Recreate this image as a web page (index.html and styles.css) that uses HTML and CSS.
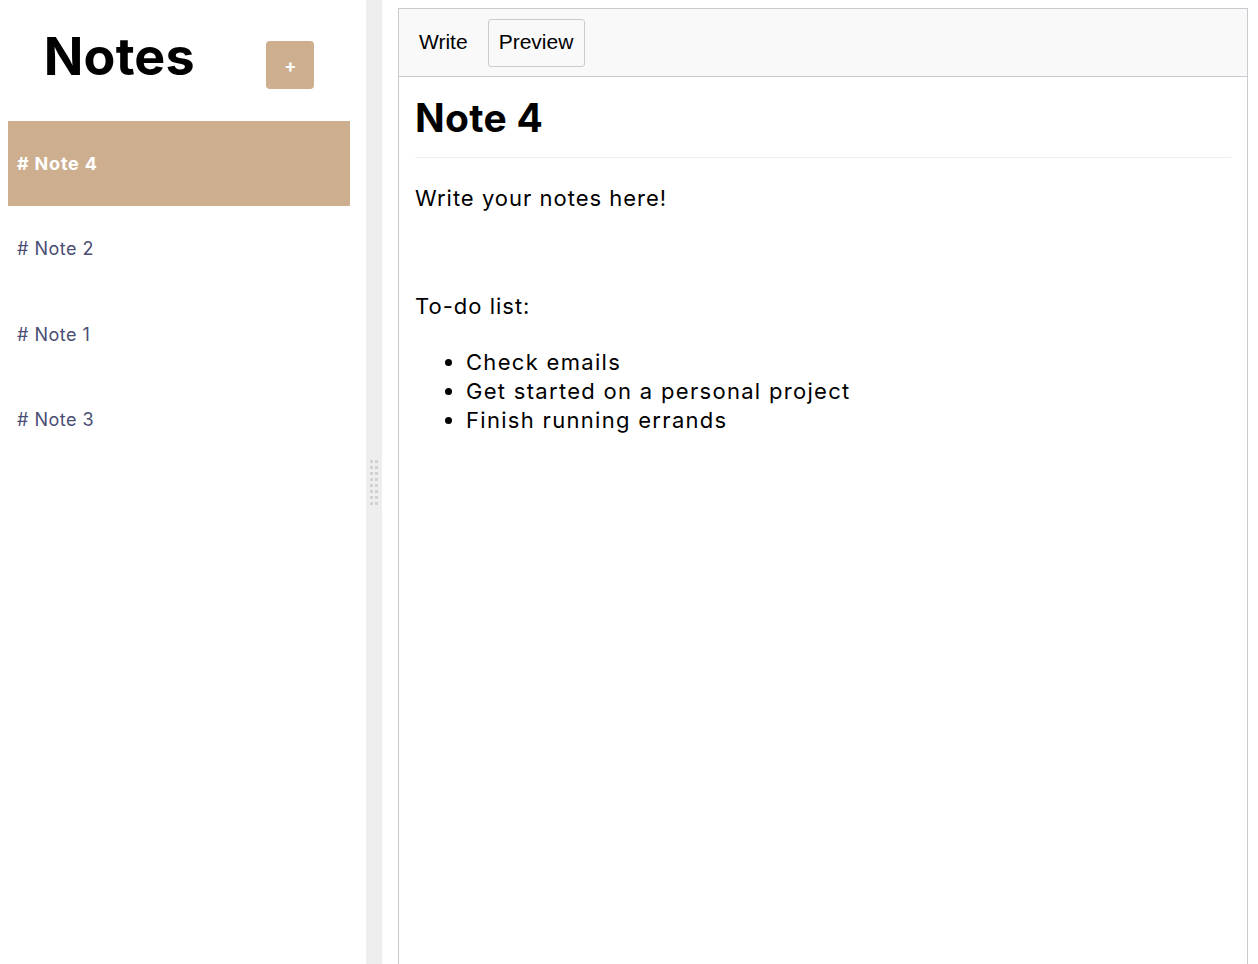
FILE: index.html
```html
<!DOCTYPE html>
<html lang="en">
<head>
<meta charset="utf-8">
<title>Notes</title>
<link rel="stylesheet" href="styles.css">
</head>
<body>
<main class="split">
  <section class="sidebar">
    <div class="sidebar-header">
      <h1 class="sidebar-title">Notes</h1>
      <button class="new-note">+</button>
    </div>
    <ul class="note-list">
      <li class="note-item selected"># Note 4</li>
      <li class="note-item"># Note 2</li>
      <li class="note-item"># Note 1</li>
      <li class="note-item"># Note 3</li>
    </ul>
  </section>
  <div class="gutter">
    <svg class="grip" width="8" height="47" viewBox="0 0 8 47">
      <g fill="#d2d2d2">
        <rect x="0" y="0" width="3" height="3"/><rect x="5" y="0" width="3" height="3"/>
        <rect x="0" y="6" width="3" height="3"/><rect x="5" y="6" width="3" height="3"/>
        <rect x="0" y="12" width="3" height="3"/><rect x="5" y="12" width="3" height="3"/>
        <rect x="0" y="18" width="3" height="3"/><rect x="5" y="18" width="3" height="3"/>
        <rect x="0" y="24" width="3" height="3"/><rect x="5" y="24" width="3" height="3"/>
        <rect x="0" y="30" width="3" height="3"/><rect x="5" y="30" width="3" height="3"/>
        <rect x="0" y="36" width="3" height="3"/><rect x="5" y="36" width="3" height="3"/>
        <rect x="0" y="42" width="3" height="3"/><rect x="5" y="42" width="3" height="3"/>
      </g>
    </svg>
  </div>
  <section class="editor">
    <div class="mde">
      <div class="mde-header">
        <button class="tab">Write</button>
        <button class="tab tab-active">Preview</button>
      </div>
      <div class="preview">
        <h1 class="preview-title">Note 4</h1>
        <p class="preview-text">Write your notes here!</p>
        <p class="preview-text spaced">To-do list:</p>
        <ul class="todo">
          <li>Check emails</li>
          <li>Get started on a personal project</li>
          <li>Finish running errands</li>
        </ul>
      </div>
    </div>
  </section>
</main>
</body>
</html>
```

FILE: styles.css
```css
html, body {
  margin: 0;
  padding: 0;
  height: 100%;
  overflow: hidden;
}

body {
  font-family: Inter, "Noto Sans", sans-serif;
  background: #fff;
}

.split {
  display: flex;
  height: 964px;
}

.sidebar {
  width: 366px;
  flex: none;
  box-sizing: border-box;
  padding: 0 16px 0 8px;
}

.sidebar-header {
  height: 121px;
  display: flex;
  justify-content: space-around;
  align-items: flex-start;
}

.sidebar-title {
  margin: 25px 0 0;
  font-size: 52px;
  line-height: 64px;
  font-weight: 700;
  color: #000;
  letter-spacing: 0.2px;
}

.new-note {
  margin-top: 41px;
  width: 48px;
  height: 48px;
  border: none;
  border-radius: 4px;
  background: #cdaf8f;
  color: #fff;
  font-family: Inter, sans-serif;
  font-weight: 700;
  font-size: 18px;
  padding: 0;
}

.note-list {
  list-style: none;
  margin: 0;
  padding: 0;
}

.note-item {
  height: 85.4px;
  display: flex;
  align-items: center;
  padding-left: 9px;
  font-size: 18px;
  letter-spacing: 0.5px;
  color: #4a4e74;
}

.note-item.selected {
  height: 85px;
  background: #cdaf8f;
  color: #fff;
  font-weight: 700;
  letter-spacing: 0.8px;
}

.gutter {
  width: 16px;
  flex: none;
  background: #eeeeee;
  display: flex;
  justify-content: center;
  align-items: center;
}

.grip {
  display: block;
  margin-top: 2px;
}

.editor {
  flex: 1;
  min-width: 0;
  padding: 8px 10px 0 16px;
}

.mde {
  border: 1px solid #c8ccd0;
  border-bottom: none;
  height: 1000px;
}

.mde-header {
  height: 67px;
  background: #f9f9f9;
  border-bottom: 1px solid #c8ccd0;
  display: flex;
  align-items: flex-start;
  padding-left: 9px;
  gap: 9px;
}

.tab {
  margin-top: 10px;
  height: 48px;
  padding: 0 10px 2px;
  border: 1px solid transparent;
  border-radius: 3px;
  background: transparent;
  font-family: "Liberation Sans", Arial, sans-serif;
  font-size: 21px;
  color: #000;
}

.tab-active {
  border-color: #c8ccd0;
  padding: 0 11px 2px 10px;
}

.preview {
  padding: 0 16px;
  color: #000;
}

.preview-title {
  margin: 17px 0 0;
  font-size: 39px;
  line-height: 48px;
  font-weight: 700;
  letter-spacing: 0.3px;
  padding-bottom: 15px;
  border-bottom: 1px solid #eeeeee;
}

.preview-text {
  margin: 24px 0 0;
  font-size: 22px;
  line-height: 33px;
  letter-spacing: 1px;
}

.preview-text.spaced {
  margin-top: 75px;
}

.todo {
  margin: 25px 0 0;
  padding-left: 51px;
  font-size: 22px;
  line-height: 29px;
  letter-spacing: 1.3px;
}
```
